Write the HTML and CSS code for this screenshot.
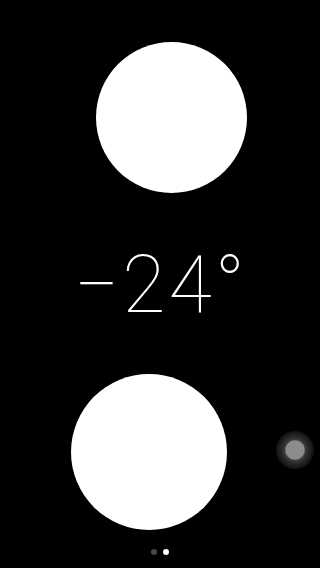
FILE: index.html
```html
<!DOCTYPE html>
<html>
<head>
<meta charset="utf-8">
<link rel="stylesheet" href="styles.css">
</head>
<body>
<main class="level">
  <div class="bubble bubble-top"></div>
  <div class="reading">−24°</div>
  <div class="bubble bubble-bottom"></div>
  <div class="pager">
    <span class="dot"></span>
    <span class="dot active"></span>
  </div>
  <div class="touch"></div>
</main>
</body>
</html>
```
FILE: styles.css
```css
html, body {
  margin: 0;
  padding: 0;
  background: #000;
}
.level {
  position: relative;
  width: 320px;
  height: 568px;
  display: flex;
  flex-direction: column;
  align-items: flex-start;
  overflow: hidden;
}
.bubble {
  background: #fff;
  border-radius: 50%;
  flex: none;
}
.bubble-top {
  width: 151px;
  height: 151px;
  margin: 42px 0 0 96px;
}
.reading {
  align-self: stretch;
  margin-top: 52px;
  height: 80px;
  line-height: 80px;
  text-align: center;
  padding-left: 2px;
  letter-spacing: 3px;
  font-family: Roboto, "Liberation Sans", sans-serif;
  font-weight: 100;
  font-size: 79px;
  color: #fff;
}
.bubble-bottom {
  width: 156px;
  height: 156px;
  margin: 49px 0 0 71px;
}
.pager {
  align-self: stretch;
  display: flex;
  justify-content: center;
  gap: 6px;
  margin-top: 19px;
}
.dot {
  width: 6px;
  height: 6px;
  border-radius: 50%;
  background: #4a4a4a;
}
.dot.active {
  background: #fff;
}
.touch {
  position: absolute;
  left: 276px;
  top: 431px;
  width: 38px;
  height: 38px;
  border-radius: 50%;
  background: radial-gradient(circle, #8c8c8c 0 9px, #3a3a3a 10.5px, #222 15px, #111 19px);
}
```
